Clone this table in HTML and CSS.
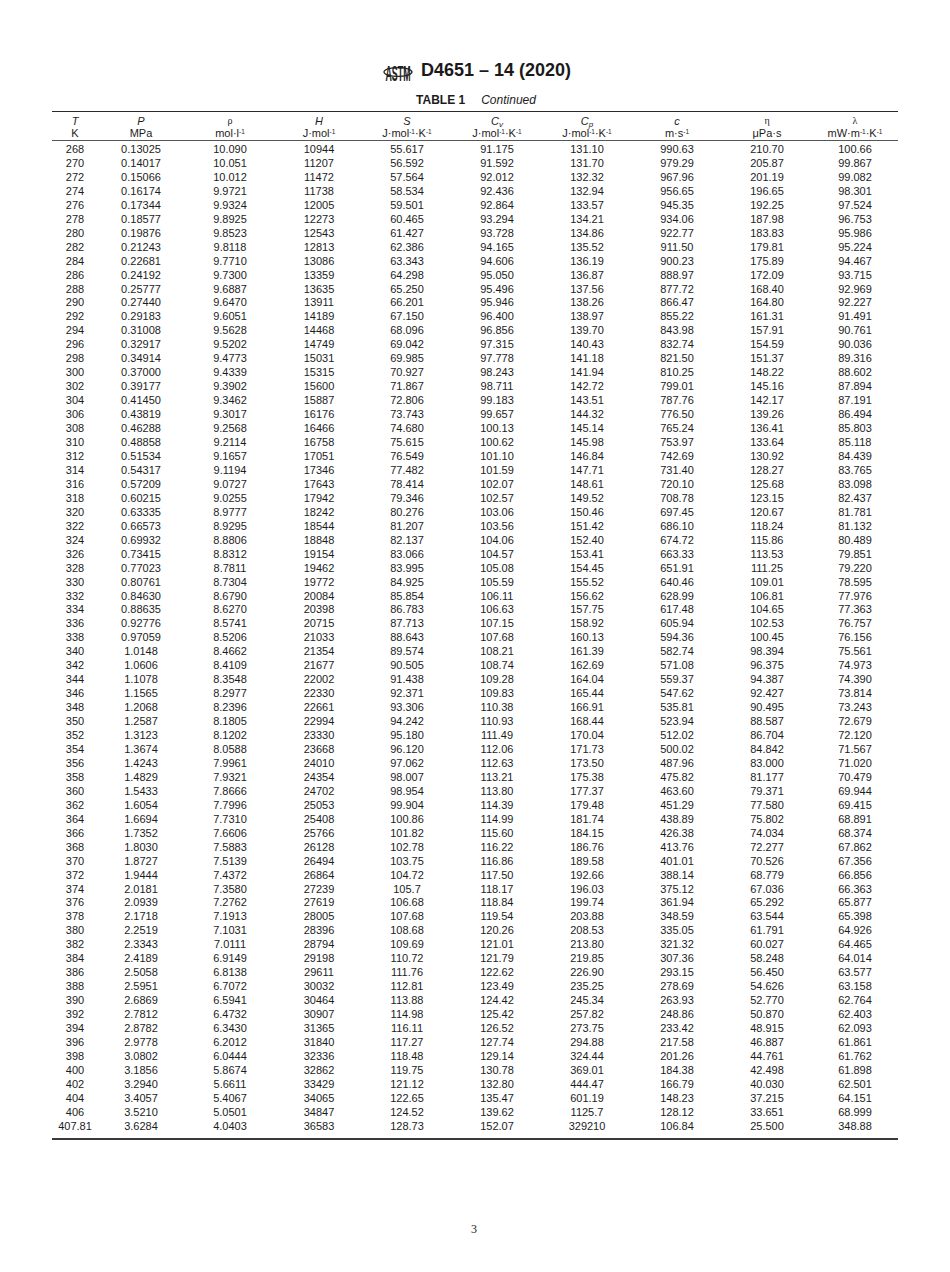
FILE: index.html
```html
<!DOCTYPE html>
<html>
<head>
<meta charset="utf-8">
<link rel="stylesheet" href="styles.css">
</head>
<body>
<div class="page">
  <div class="doc-head">
    <svg class="logo" viewBox="0 0 30 26" width="30" height="26">
      <g transform="translate(0,24) scale(1,2)">
        <text x="15" y="0" text-anchor="middle" textLength="25" lengthAdjust="spacingAndGlyphs" class="logo-text">ASTM</text>
      </g>
      <ellipse cx="15" cy="15" rx="14" ry="4.4" fill="none" stroke="#222" stroke-width="1.3"/>
    </svg>
    <span class="doc-title">D4651 – 14 (2020)</span>
  </div>
  <div class="caption"><span class="cap-label">TABLE 1</span><span class="cap-cont">Continued</span></div>
  <table class="data">
    <colgroup>
      <col class="w46"><col class="w86"><col class="w92"><col class="w86"><col class="w90"><col class="w90"><col class="w90"><col class="w90"><col class="w90"><col class="w86">
    </colgroup>
    <thead>
      <tr>
        <th><i>T</i><br>K</th>
        <th><i>P</i><br>MPa</th>
        <th><span class="greek">ρ</span><br>mol·l<sup>-1</sup></th>
        <th><i>H</i><br>J·mol<sup>-1</sup></th>
        <th><i>S</i><br>J·mol<sup>-1</sup>·K<sup>-1</sup></th>
        <th><i>C<sub>v</sub></i><br>J·mol<sup>-1</sup>·K<sup>-1</sup></th>
        <th><i>C<sub>p</sub></i><br>J·mol<sup>-1</sup>·K<sup>-1</sup></th>
        <th><i>c</i><br>m·s<sup>-1</sup></th>
        <th><span class="greek">η</span><br>μPa·s</th>
        <th><span class="greek">λ</span><br>mW·m<sup>-1</sup>·K<sup>-1</sup></th>
      </tr>
    </thead>
    <tbody>
<tr><td>268</td><td>0.13025</td><td>10.090</td><td>10944</td><td>55.617</td><td>91.175</td><td>131.10</td><td>990.63</td><td>210.70</td><td>100.66</td></tr>
<tr><td>270</td><td>0.14017</td><td>10.051</td><td>11207</td><td>56.592</td><td>91.592</td><td>131.70</td><td>979.29</td><td>205.87</td><td>99.867</td></tr>
<tr><td>272</td><td>0.15066</td><td>10.012</td><td>11472</td><td>57.564</td><td>92.012</td><td>132.32</td><td>967.96</td><td>201.19</td><td>99.082</td></tr>
<tr><td>274</td><td>0.16174</td><td>9.9721</td><td>11738</td><td>58.534</td><td>92.436</td><td>132.94</td><td>956.65</td><td>196.65</td><td>98.301</td></tr>
<tr><td>276</td><td>0.17344</td><td>9.9324</td><td>12005</td><td>59.501</td><td>92.864</td><td>133.57</td><td>945.35</td><td>192.25</td><td>97.524</td></tr>
<tr><td>278</td><td>0.18577</td><td>9.8925</td><td>12273</td><td>60.465</td><td>93.294</td><td>134.21</td><td>934.06</td><td>187.98</td><td>96.753</td></tr>
<tr><td>280</td><td>0.19876</td><td>9.8523</td><td>12543</td><td>61.427</td><td>93.728</td><td>134.86</td><td>922.77</td><td>183.83</td><td>95.986</td></tr>
<tr><td>282</td><td>0.21243</td><td>9.8118</td><td>12813</td><td>62.386</td><td>94.165</td><td>135.52</td><td>911.50</td><td>179.81</td><td>95.224</td></tr>
<tr><td>284</td><td>0.22681</td><td>9.7710</td><td>13086</td><td>63.343</td><td>94.606</td><td>136.19</td><td>900.23</td><td>175.89</td><td>94.467</td></tr>
<tr><td>286</td><td>0.24192</td><td>9.7300</td><td>13359</td><td>64.298</td><td>95.050</td><td>136.87</td><td>888.97</td><td>172.09</td><td>93.715</td></tr>
<tr><td>288</td><td>0.25777</td><td>9.6887</td><td>13635</td><td>65.250</td><td>95.496</td><td>137.56</td><td>877.72</td><td>168.40</td><td>92.969</td></tr>
<tr><td>290</td><td>0.27440</td><td>9.6470</td><td>13911</td><td>66.201</td><td>95.946</td><td>138.26</td><td>866.47</td><td>164.80</td><td>92.227</td></tr>
<tr><td>292</td><td>0.29183</td><td>9.6051</td><td>14189</td><td>67.150</td><td>96.400</td><td>138.97</td><td>855.22</td><td>161.31</td><td>91.491</td></tr>
<tr><td>294</td><td>0.31008</td><td>9.5628</td><td>14468</td><td>68.096</td><td>96.856</td><td>139.70</td><td>843.98</td><td>157.91</td><td>90.761</td></tr>
<tr><td>296</td><td>0.32917</td><td>9.5202</td><td>14749</td><td>69.042</td><td>97.315</td><td>140.43</td><td>832.74</td><td>154.59</td><td>90.036</td></tr>
<tr><td>298</td><td>0.34914</td><td>9.4773</td><td>15031</td><td>69.985</td><td>97.778</td><td>141.18</td><td>821.50</td><td>151.37</td><td>89.316</td></tr>
<tr><td>300</td><td>0.37000</td><td>9.4339</td><td>15315</td><td>70.927</td><td>98.243</td><td>141.94</td><td>810.25</td><td>148.22</td><td>88.602</td></tr>
<tr><td>302</td><td>0.39177</td><td>9.3902</td><td>15600</td><td>71.867</td><td>98.711</td><td>142.72</td><td>799.01</td><td>145.16</td><td>87.894</td></tr>
<tr><td>304</td><td>0.41450</td><td>9.3462</td><td>15887</td><td>72.806</td><td>99.183</td><td>143.51</td><td>787.76</td><td>142.17</td><td>87.191</td></tr>
<tr><td>306</td><td>0.43819</td><td>9.3017</td><td>16176</td><td>73.743</td><td>99.657</td><td>144.32</td><td>776.50</td><td>139.26</td><td>86.494</td></tr>
<tr><td>308</td><td>0.46288</td><td>9.2568</td><td>16466</td><td>74.680</td><td>100.13</td><td>145.14</td><td>765.24</td><td>136.41</td><td>85.803</td></tr>
<tr><td>310</td><td>0.48858</td><td>9.2114</td><td>16758</td><td>75.615</td><td>100.62</td><td>145.98</td><td>753.97</td><td>133.64</td><td>85.118</td></tr>
<tr><td>312</td><td>0.51534</td><td>9.1657</td><td>17051</td><td>76.549</td><td>101.10</td><td>146.84</td><td>742.69</td><td>130.92</td><td>84.439</td></tr>
<tr><td>314</td><td>0.54317</td><td>9.1194</td><td>17346</td><td>77.482</td><td>101.59</td><td>147.71</td><td>731.40</td><td>128.27</td><td>83.765</td></tr>
<tr><td>316</td><td>0.57209</td><td>9.0727</td><td>17643</td><td>78.414</td><td>102.07</td><td>148.61</td><td>720.10</td><td>125.68</td><td>83.098</td></tr>
<tr><td>318</td><td>0.60215</td><td>9.0255</td><td>17942</td><td>79.346</td><td>102.57</td><td>149.52</td><td>708.78</td><td>123.15</td><td>82.437</td></tr>
<tr><td>320</td><td>0.63335</td><td>8.9777</td><td>18242</td><td>80.276</td><td>103.06</td><td>150.46</td><td>697.45</td><td>120.67</td><td>81.781</td></tr>
<tr><td>322</td><td>0.66573</td><td>8.9295</td><td>18544</td><td>81.207</td><td>103.56</td><td>151.42</td><td>686.10</td><td>118.24</td><td>81.132</td></tr>
<tr><td>324</td><td>0.69932</td><td>8.8806</td><td>18848</td><td>82.137</td><td>104.06</td><td>152.40</td><td>674.72</td><td>115.86</td><td>80.489</td></tr>
<tr><td>326</td><td>0.73415</td><td>8.8312</td><td>19154</td><td>83.066</td><td>104.57</td><td>153.41</td><td>663.33</td><td>113.53</td><td>79.851</td></tr>
<tr><td>328</td><td>0.77023</td><td>8.7811</td><td>19462</td><td>83.995</td><td>105.08</td><td>154.45</td><td>651.91</td><td>111.25</td><td>79.220</td></tr>
<tr><td>330</td><td>0.80761</td><td>8.7304</td><td>19772</td><td>84.925</td><td>105.59</td><td>155.52</td><td>640.46</td><td>109.01</td><td>78.595</td></tr>
<tr><td>332</td><td>0.84630</td><td>8.6790</td><td>20084</td><td>85.854</td><td>106.11</td><td>156.62</td><td>628.99</td><td>106.81</td><td>77.976</td></tr>
<tr><td>334</td><td>0.88635</td><td>8.6270</td><td>20398</td><td>86.783</td><td>106.63</td><td>157.75</td><td>617.48</td><td>104.65</td><td>77.363</td></tr>
<tr><td>336</td><td>0.92776</td><td>8.5741</td><td>20715</td><td>87.713</td><td>107.15</td><td>158.92</td><td>605.94</td><td>102.53</td><td>76.757</td></tr>
<tr><td>338</td><td>0.97059</td><td>8.5206</td><td>21033</td><td>88.643</td><td>107.68</td><td>160.13</td><td>594.36</td><td>100.45</td><td>76.156</td></tr>
<tr><td>340</td><td>1.0148</td><td>8.4662</td><td>21354</td><td>89.574</td><td>108.21</td><td>161.39</td><td>582.74</td><td>98.394</td><td>75.561</td></tr>
<tr><td>342</td><td>1.0606</td><td>8.4109</td><td>21677</td><td>90.505</td><td>108.74</td><td>162.69</td><td>571.08</td><td>96.375</td><td>74.973</td></tr>
<tr><td>344</td><td>1.1078</td><td>8.3548</td><td>22002</td><td>91.438</td><td>109.28</td><td>164.04</td><td>559.37</td><td>94.387</td><td>74.390</td></tr>
<tr><td>346</td><td>1.1565</td><td>8.2977</td><td>22330</td><td>92.371</td><td>109.83</td><td>165.44</td><td>547.62</td><td>92.427</td><td>73.814</td></tr>
<tr><td>348</td><td>1.2068</td><td>8.2396</td><td>22661</td><td>93.306</td><td>110.38</td><td>166.91</td><td>535.81</td><td>90.495</td><td>73.243</td></tr>
<tr><td>350</td><td>1.2587</td><td>8.1805</td><td>22994</td><td>94.242</td><td>110.93</td><td>168.44</td><td>523.94</td><td>88.587</td><td>72.679</td></tr>
<tr><td>352</td><td>1.3123</td><td>8.1202</td><td>23330</td><td>95.180</td><td>111.49</td><td>170.04</td><td>512.02</td><td>86.704</td><td>72.120</td></tr>
<tr><td>354</td><td>1.3674</td><td>8.0588</td><td>23668</td><td>96.120</td><td>112.06</td><td>171.73</td><td>500.02</td><td>84.842</td><td>71.567</td></tr>
<tr><td>356</td><td>1.4243</td><td>7.9961</td><td>24010</td><td>97.062</td><td>112.63</td><td>173.50</td><td>487.96</td><td>83.000</td><td>71.020</td></tr>
<tr><td>358</td><td>1.4829</td><td>7.9321</td><td>24354</td><td>98.007</td><td>113.21</td><td>175.38</td><td>475.82</td><td>81.177</td><td>70.479</td></tr>
<tr><td>360</td><td>1.5433</td><td>7.8666</td><td>24702</td><td>98.954</td><td>113.80</td><td>177.37</td><td>463.60</td><td>79.371</td><td>69.944</td></tr>
<tr><td>362</td><td>1.6054</td><td>7.7996</td><td>25053</td><td>99.904</td><td>114.39</td><td>179.48</td><td>451.29</td><td>77.580</td><td>69.415</td></tr>
<tr><td>364</td><td>1.6694</td><td>7.7310</td><td>25408</td><td>100.86</td><td>114.99</td><td>181.74</td><td>438.89</td><td>75.802</td><td>68.891</td></tr>
<tr><td>366</td><td>1.7352</td><td>7.6606</td><td>25766</td><td>101.82</td><td>115.60</td><td>184.15</td><td>426.38</td><td>74.034</td><td>68.374</td></tr>
<tr><td>368</td><td>1.8030</td><td>7.5883</td><td>26128</td><td>102.78</td><td>116.22</td><td>186.76</td><td>413.76</td><td>72.277</td><td>67.862</td></tr>
<tr><td>370</td><td>1.8727</td><td>7.5139</td><td>26494</td><td>103.75</td><td>116.86</td><td>189.58</td><td>401.01</td><td>70.526</td><td>67.356</td></tr>
<tr><td>372</td><td>1.9444</td><td>7.4372</td><td>26864</td><td>104.72</td><td>117.50</td><td>192.66</td><td>388.14</td><td>68.779</td><td>66.856</td></tr>
<tr><td>374</td><td>2.0181</td><td>7.3580</td><td>27239</td><td>105.7</td><td>118.17</td><td>196.03</td><td>375.12</td><td>67.036</td><td>66.363</td></tr>
<tr><td>376</td><td>2.0939</td><td>7.2762</td><td>27619</td><td>106.68</td><td>118.84</td><td>199.74</td><td>361.94</td><td>65.292</td><td>65.877</td></tr>
<tr><td>378</td><td>2.1718</td><td>7.1913</td><td>28005</td><td>107.68</td><td>119.54</td><td>203.88</td><td>348.59</td><td>63.544</td><td>65.398</td></tr>
<tr><td>380</td><td>2.2519</td><td>7.1031</td><td>28396</td><td>108.68</td><td>120.26</td><td>208.53</td><td>335.05</td><td>61.791</td><td>64.926</td></tr>
<tr><td>382</td><td>2.3343</td><td>7.0111</td><td>28794</td><td>109.69</td><td>121.01</td><td>213.80</td><td>321.32</td><td>60.027</td><td>64.465</td></tr>
<tr><td>384</td><td>2.4189</td><td>6.9149</td><td>29198</td><td>110.72</td><td>121.79</td><td>219.85</td><td>307.36</td><td>58.248</td><td>64.014</td></tr>
<tr><td>386</td><td>2.5058</td><td>6.8138</td><td>29611</td><td>111.76</td><td>122.62</td><td>226.90</td><td>293.15</td><td>56.450</td><td>63.577</td></tr>
<tr><td>388</td><td>2.5951</td><td>6.7072</td><td>30032</td><td>112.81</td><td>123.49</td><td>235.25</td><td>278.69</td><td>54.626</td><td>63.158</td></tr>
<tr><td>390</td><td>2.6869</td><td>6.5941</td><td>30464</td><td>113.88</td><td>124.42</td><td>245.34</td><td>263.93</td><td>52.770</td><td>62.764</td></tr>
<tr><td>392</td><td>2.7812</td><td>6.4732</td><td>30907</td><td>114.98</td><td>125.42</td><td>257.82</td><td>248.86</td><td>50.870</td><td>62.403</td></tr>
<tr><td>394</td><td>2.8782</td><td>6.3430</td><td>31365</td><td>116.11</td><td>126.52</td><td>273.75</td><td>233.42</td><td>48.915</td><td>62.093</td></tr>
<tr><td>396</td><td>2.9778</td><td>6.2012</td><td>31840</td><td>117.27</td><td>127.74</td><td>294.88</td><td>217.58</td><td>46.887</td><td>61.861</td></tr>
<tr><td>398</td><td>3.0802</td><td>6.0444</td><td>32336</td><td>118.48</td><td>129.14</td><td>324.44</td><td>201.26</td><td>44.761</td><td>61.762</td></tr>
<tr><td>400</td><td>3.1856</td><td>5.8674</td><td>32862</td><td>119.75</td><td>130.78</td><td>369.01</td><td>184.38</td><td>42.498</td><td>61.898</td></tr>
<tr><td>402</td><td>3.2940</td><td>5.6611</td><td>33429</td><td>121.12</td><td>132.80</td><td>444.47</td><td>166.79</td><td>40.030</td><td>62.501</td></tr>
<tr><td>404</td><td>3.4057</td><td>5.4067</td><td>34065</td><td>122.65</td><td>135.47</td><td>601.19</td><td>148.23</td><td>37.215</td><td>64.151</td></tr>
<tr><td>406</td><td>3.5210</td><td>5.0501</td><td>34847</td><td>124.52</td><td>139.62</td><td>1125.7</td><td>128.12</td><td>33.651</td><td>68.999</td></tr>
<tr><td>407.81</td><td>3.6284</td><td>4.0403</td><td>36583</td><td>128.73</td><td>152.07</td><td>329210</td><td>106.84</td><td>25.500</td><td>348.88</td></tr>
    </tbody>
  </table>
  <div class="page-num">3</div>
</div>
</body>
</html>
```
FILE: styles.css
```css
html, body {
  margin: 0;
  padding: 0;
  background: #ffffff;
}
body {
  font-family: "Liberation Sans", Arial, sans-serif;
  color: #1c1c1c;
}
.page {
  width: 950px;
  padding-top: 56px;
}
.doc-head {
  display: flex;
  justify-content: center;
  align-items: center;
  gap: 8px;
  height: 28px;
  padding-left: 4px;
}
.logo {
  display: block;
  overflow: visible;
}
.logo-text {
  font-family: "Liberation Sans", Arial, sans-serif;
  font-weight: bold;
  font-size: 11px;
  fill: #222;
}
.doc-title {
  font-size: 18px;
  font-weight: bold;
  line-height: 24px;
  color: #1a1a1a;
}
.caption {
  display: flex;
  justify-content: center;
  gap: 16px;
  font-size: 12px;
  line-height: 14px;
  margin-top: 9px;
  margin-bottom: 4px;
  padding-left: 2px;
}
.cap-label {
  font-weight: bold;
}
.cap-cont {
  font-style: italic;
}
.data {
  margin-left: 52px;
  width: 846px;
  table-layout: fixed;
  border-collapse: collapse;
  border-top: 1px solid #2a2a2a;
  border-bottom: 2px solid #3a3a3a;
  font-size: 11px;
}
.w46 { width: 46px; }
.w86 { width: 86px; }
.w90 { width: 90px; }
.w92 { width: 92px; }
.data th {
  font-weight: normal;
  line-height: 12px;
  padding: 2px 0 1px 0;
  text-align: center;
  border-bottom: 1px solid #555;
  white-space: nowrap;
}
.data th i {
  font-style: italic;
}
.data th sup {
  font-size: 6.5px;
  line-height: 0;
  vertical-align: 3px;
}
.data th sub {
  font-size: 8px;
  line-height: 0;
  vertical-align: -2px;
}
.greek {
  font-family: "Liberation Serif", "Times New Roman", serif;
  font-size: 10px;
}
.data td {
  padding: 0;
  line-height: 13.95px;
  height: 13.95px;
  text-align: center;
  white-space: nowrap;
}
.data tbody tr:first-child td {
  padding-top: 2px;
}
.data tbody tr:last-child td {
  padding-bottom: 4px;
}
.page-num {
  margin-top: 82px;
  text-align: center;
  font-family: "Liberation Serif", "Times New Roman", serif;
  font-size: 12px;
  line-height: 14px;
  padding-right: 2px;
}
```
